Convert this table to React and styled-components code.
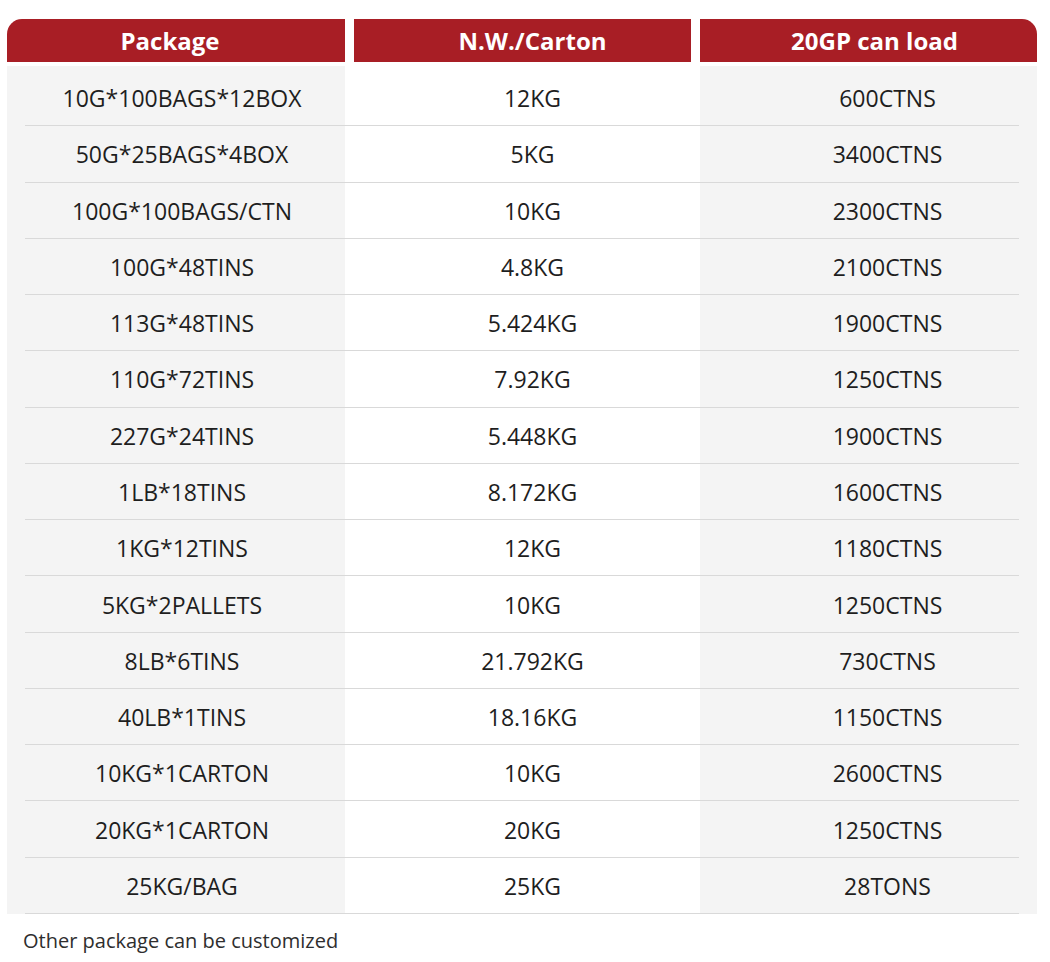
import React from 'react';
import styled, { createGlobalStyle } from 'styled-components';

const GlobalStyle = createGlobalStyle`
  body {
    margin: 0;
    background: #ffffff;
    font-family: "Open Sans", "Noto Sans", sans-serif;
  }
`

const rows = [
  ['10G*100BAGS*12BOX', '12KG', '600CTNS'],
  ['50G*25BAGS*4BOX', '5KG', '3400CTNS'],
  ['100G*100BAGS/CTN', '10KG', '2300CTNS'],
  ['100G*48TINS', '4.8KG', '2100CTNS'],
  ['113G*48TINS', '5.424KG', '1900CTNS'],
  ['110G*72TINS', '7.92KG', '1250CTNS'],
  ['227G*24TINS', '5.448KG', '1900CTNS'],
  ['1LB*18TINS', '8.172KG', '1600CTNS'],
  ['1KG*12TINS', '12KG', '1180CTNS'],
  ['5KG*2PALLETS', '10KG', '1250CTNS'],
  ['8LB*6TINS', '21.792KG', '730CTNS'],
  ['40LB*1TINS', '18.16KG', '1150CTNS'],
  ['10KG*1CARTON', '10KG', '2600CTNS'],
  ['20KG*1CARTON', '20KG', '1250CTNS'],
  ['25KG/BAG', '25KG', '28TONS'],
]

// horizontal nudge of the text in each column, as in the picture
const shifts = [12, 20, 38]
const headShifts = [-12, 20, 12]

const Page = styled.div`
  padding: 19px 12px 0 7px;
  width: 1031px;
`

const Table = styled.div`
  display: flex;
  flex-direction: column;
  gap: 4px;
`

const HeadRow = styled.div`
  display: grid;
  grid-template-columns: 338px 337px 337px;
  column-gap: 9px;
`

const HeadCell = styled.div`
  height: 43px;
  display: flex;
  align-items: center;
  justify-content: center;
  background: #a81e25;
  color: #ffffff;
  font-size: 24px;
  font-weight: 700;
  padding-left: ${p => (p.$shift > 0 ? p.$shift : 0)}px;
  padding-right: ${p => (p.$shift < 0 ? -p.$shift : 0)}px;
  &:first-child {
    border-top-left-radius: 15px;
  }
  &:last-child {
    border-top-right-radius: 15px;
  }
`

const Body = styled.div`
  display: flex;
  flex-direction: column;
`

const Row = styled.div`
  position: relative;
  display: grid;
  grid-template-columns: 338px 337px 337px;
  column-gap: 9px;
  height: 56.27px;
  &:first-child {
    height: 60.27px;
  }
  &::after {
    content: '';
    position: absolute;
    left: 18px;
    right: 19px;
    bottom: 0;
    height: 1px;
    background: #d9d9d9;
  }
`

const Cell = styled.div`
  display: flex;
  align-items: center;
  justify-content: center;
  background: ${p => (p.$gray ? '#f4f4f4' : '#ffffff')};
  color: #1e1e1e;
  font-size: 23px;
  padding-left: ${p => p.$shift}px;
  ${Row}:first-child & {
    padding-top: 4px;
  }
`

const Note = styled.div`
  margin-top: 14px;
  padding-left: 16px;
  font-size: 20px;
  line-height: 26px;
  color: #2e2e2e;
`

const App = () => {
  return (
    <Page>
      <GlobalStyle />
      <Table>
        <HeadRow>
          <HeadCell $shift={headShifts[0]}>Package</HeadCell>
          <HeadCell $shift={headShifts[1]}>N.W./Carton</HeadCell>
          <HeadCell $shift={headShifts[2]}>20GP can load</HeadCell>
        </HeadRow>
        <Body>
          {rows.map((r, i) => (
            <Row key={i}>
              <Cell $gray $shift={shifts[0]}>{r[0]}</Cell>
              <Cell $shift={shifts[1]}>{r[1]}</Cell>
              <Cell $gray $shift={shifts[2]}>{r[2]}</Cell>
            </Row>
          ))}
        </Body>
      </Table>
      <Note>Other package can be customized</Note>
    </Page>
  )
}

export default App;
